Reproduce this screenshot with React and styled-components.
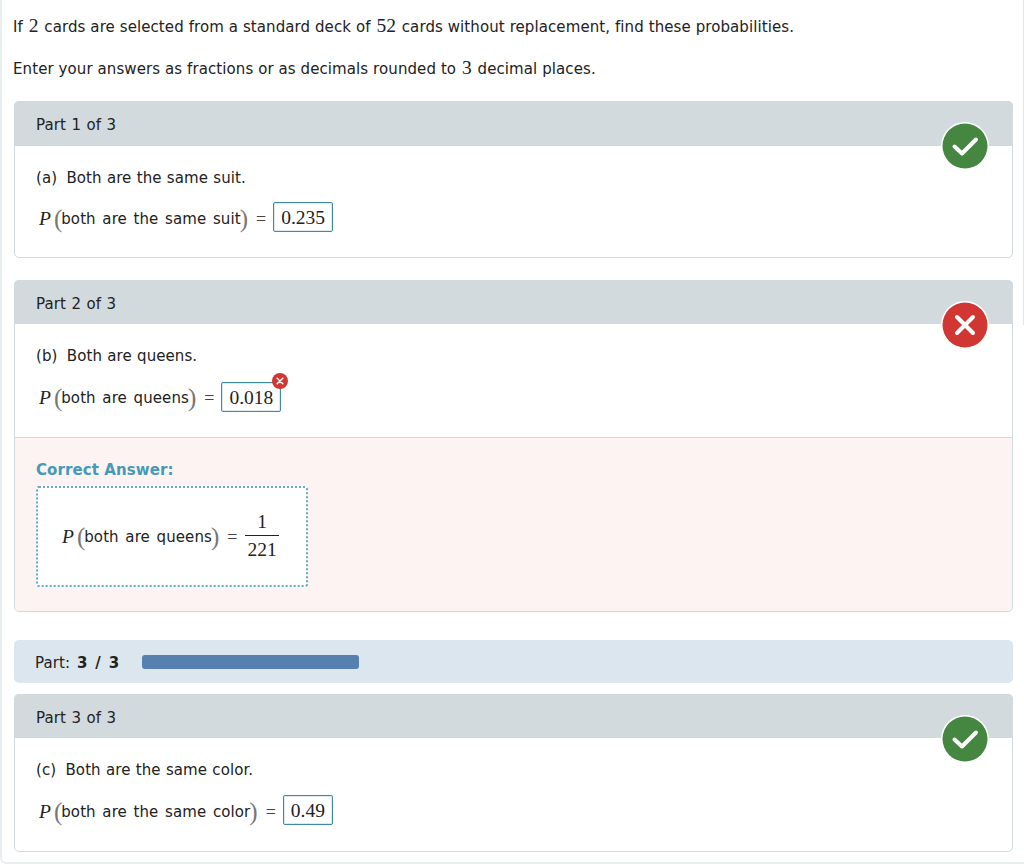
import React from "react";
import styled, { createGlobalStyle } from "styled-components";

const GlobalStyle = createGlobalStyle`
  html, body { margin: 0; padding: 0; background: #fff; }
  body { font-family: "DejaVu Sans", Verdana, sans-serif; color: #222; font-size: 15px; letter-spacing: 0.09px; }
`;

const Page = styled.div`
  width: 1024px;
  height: 864px;
  box-sizing: border-box;
  overflow: hidden;
  padding: 0 11px 0 12px;
  position: relative;
  border-left: 2px solid #e9eff1;
  border-bottom: 2px solid #e9eff1;
  border-bottom-left-radius: 6px;
`;

const RightEdge = styled.div`
  position: absolute;
  top: 0;
  right: 0;
  width: 1px;
  height: 325px;
  background: #e3e8ea;
`;

const Intro = styled.p`
  margin: 0 0 0 -1px;
  line-height: 20px;
  padding-top: ${(p) => p.$top}px;
  height: 20px;
  box-sizing: content-box;
`;

const Num = styled.span`
  font-family: "Liberation Serif", "Times New Roman", serif;
  font-size: 19.5px;
  letter-spacing: 0;
  margin: 0 1px;
`;

const Card = styled.section`
  position: relative;
  border: 1px solid #d3dade;
  border-radius: 5px;
  background: #fff;
  margin-top: ${(p) => p.$top}px;
  height: ${(p) => p.$height}px;
  box-sizing: border-box;
  display: flex;
  flex-direction: column;
`;

const CardHeader = styled.header`
  height: ${(p) => p.$height || 44}px;
  flex: none;
  margin: -1px -1px 0;
  background: #d3dade;
  border-radius: 5px 5px 0 0;
  line-height: 48px;
  padding-left: 22px;
  word-spacing: 0.6px;
`;

const Body = styled.div`
  padding: 22px 21px 0;
  flex: none;
  height: ${(p) => p.$height}px;
  box-sizing: border-box;
`;

const Question = styled.div`
  line-height: 20px;
  word-spacing: 0.4px;
`;

const Label = styled.span`
  margin-right: 4px;
`;

const Formula = styled.div`
  display: flex;
  align-items: center;
  margin-top: ${(p) => p.$top ?? 15}px;
  margin-left: ${(p) => p.$left || 3}px;
  height: 32px;
`;

const Italic = styled.span`
  font-family: "Liberation Serif", serif;
  font-style: italic;
  font-size: 19.5px;
  letter-spacing: 0;
  margin-right: 4px;
`;

const Paren = styled.span`
  font-family: "Liberation Serif", serif;
  font-size: 25px;
  font-weight: 300;
  color: #777;
  line-height: 1;
  letter-spacing: 0;
  margin: -2px -1px 0;
`;

const Words = styled.span`
  word-spacing: 1.8px;
`;

const Equals = styled.span`
  font-family: "Liberation Serif", serif;
  font-size: 18px;
  letter-spacing: 0;
  margin: 0 ${(p) => p.$gap || 7}px 0 9px;
  color: #444;
`;

const AnswerBox = styled.span`
  position: relative;
  font-family: "Liberation Serif", serif;
  font-size: 19.5px;
  letter-spacing: 0;
  color: #222;
  height: 30px;
  line-height: 29px;
  margin-top: ${(p) => (p.$raised ? -4 : -2)}px;
  box-sizing: border-box;
  border: 1px solid #3f8ba6;
  box-shadow: inset 0 0 0 1px #dcebf0;
  border-radius: 2px;
  padding: 0 7px;
`;

const ErrorBadge = styled.svg`
  position: absolute;
  top: -10px;
  right: -8px;
  width: 16px;
  height: 16px;
`;

const StatusIcon = styled.svg`
  position: absolute;
  top: 20px;
  right: 23px;
  width: 48px;
  height: 48px;
`;

const Feedback = styled.div`
  flex: 1;
  background: #fdf3f2;
  border-top: 1px solid #d3dade;
  padding: 22px 21px 0;
  border-radius: 0 0 5px 5px;
`;

const FeedbackTitle = styled.div`
  font-weight: bold;
  line-height: 20px;
  color: #459ab7;
`;

const AnswerPanel = styled.div`
  width: 272px;
  height: 101px;
  box-sizing: border-box;
  margin: 6px 0 0;
  background: #fff;
  border: 2px dotted #63abc3;
  border-radius: 3px;
  padding: 0 23px;
  display: flex;
  align-items: center;
`;

const Fraction = styled.span`
  display: inline-flex;
  flex-direction: column;
  align-items: center;
  font-family: "Liberation Serif", serif;
  font-size: 19.5px;
  letter-spacing: 0;
  line-height: 22px;
`;

const Numerator = styled.span`
  align-self: stretch;
  text-align: center;
  padding: 1px 2px 0;
  border-bottom: 1px solid #222;
  height: 24px;
`;

const Denominator = styled.span`
  padding: 3px 2px 0;
  height: 25px;
`;

const ProgressRow = styled.div`
  margin-top: 28px;
  height: 43px;
  background: #dce6ee;
  border-radius: 5px;
  display: flex;
  align-items: center;
  padding-left: 21px;
`;

const ProgressLabel = styled.span`
  width: 107px;
  flex: none;
  margin-top: 2px;
  b { word-spacing: 1.5px; margin-left: 2px; letter-spacing: 0.6px; }
`;

const ProgressBar = styled.div`
  width: 217px;
  height: 14px;
  background: #5580b0;
  border-radius: 3px;
`;

const Check = () => (
  <StatusIcon viewBox="0 0 48 48">
    <circle cx="24" cy="24" r="24" fill="#fff" />
    <circle cx="24" cy="24" r="22.5" fill="#458641" />
    <path d="M13.5 24.5l7.5 7 14-14" fill="none" stroke="#fff" strokeWidth="4" strokeLinecap="round" strokeLinejoin="round" />
  </StatusIcon>
);

const Cross = () => (
  <StatusIcon viewBox="0 0 48 48">
    <circle cx="24" cy="24" r="24" fill="#fff" />
    <circle cx="24" cy="24" r="22.5" fill="#d13732" />
    <path d="M16 16l16 16M32 16l-16 16" fill="none" stroke="#fff" strokeWidth="4" strokeLinecap="round" />
  </StatusIcon>
);

const Probability = ({ text }) => (
  <>
    <Italic>P</Italic>
    <Paren>(</Paren>
    <Words>{text}</Words>
    <Paren>)</Paren>
  </>
);

export default function App() {
  return (
    <Page>
      <GlobalStyle />
      <RightEdge />
      <Intro $top={16}>
        If <Num>2</Num> cards are selected from a standard deck of <Num>52</Num> cards without replacement, find these probabilities.
      </Intro>
      <Intro $top={22}>
        Enter your answers as fractions or as decimals rounded to <Num>3</Num> decimal places.
      </Intro>

      <Card $top={23} $height={157}>
        <CardHeader $height={45}>Part 1 of 3</CardHeader>
        <Body $height={111}>
          <Question><Label>(a)</Label> Both are the same suit.</Question>
          <Formula>
            <Probability text="both are the same suit" />
            <Equals>=</Equals>
            <AnswerBox $raised>0.235</AnswerBox>
          </Formula>
        </Body>
        <Check />
      </Card>

      <Card $top={22} $height={332}>
        <CardHeader>Part 2 of 3</CardHeader>
        <Body $height={113}>
          <Question><Label>(b)</Label> Both are queens.</Question>
          <Formula $top={16}>
            <Probability text="both are queens" />
            <Equals>=</Equals>
            <AnswerBox>
              0.018
              <ErrorBadge viewBox="0 0 16 16">
                <circle cx="8" cy="8" r="8" fill="#d13732" />
                <path d="M5.2 5.2l5.6 5.6M10.8 5.2l-5.6 5.6" stroke="#fff" strokeWidth="1.5" strokeLinecap="round" />
              </ErrorBadge>
            </AnswerBox>
          </Formula>
        </Body>
        <Feedback>
          <FeedbackTitle>Correct Answer:</FeedbackTitle>
          <AnswerPanel>
            <Formula $top={1} $left={1}>
              <Probability text="both are queens" />
              <Equals $gap={8}>=</Equals>
              <Fraction>
                <Numerator>1</Numerator>
                <Denominator>221</Denominator>
              </Fraction>
            </Formula>
          </AnswerPanel>
        </Feedback>
        <Cross />
      </Card>

      <ProgressRow>
        <ProgressLabel>Part: <b>3 / 3</b></ProgressLabel>
        <ProgressBar />
      </ProgressRow>

      <Card $top={11} $height={158}>
        <CardHeader>Part 3 of 3</CardHeader>
        <Body $height={113}>
          <Question><Label>(c)</Label> Both are the same color.</Question>
          <Formula $top={16}>
            <Probability text="both are the same color" />
            <Equals>=</Equals>
            <AnswerBox $raised>0.49</AnswerBox>
          </Formula>
        </Body>
        <Check />
      </Card>
    </Page>
  );
}
